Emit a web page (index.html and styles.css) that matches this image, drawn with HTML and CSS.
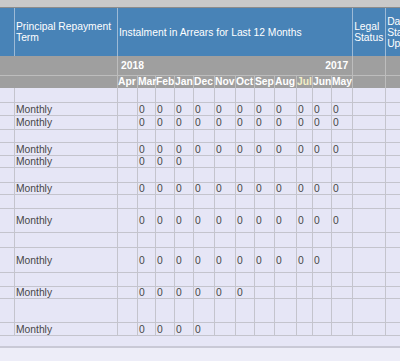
FILE: index.html
```html
<!DOCTYPE html>
<html lang="en">
  <head>
    <meta charset="UTF-8" />
    <title>Instalment Arrears</title>
    <link rel="stylesheet" href="styles.css">
  </head>
  <body>
    <div class="topbar"></div>
    <div class="grid-wrap">
      <table class="arrears">
        <colgroup>
          <col class="c-sel" />
          <col class="c-term" />
          <col class="c-apr" />
          <col class="c-mar" />
          <col class="c-feb" />
          <col class="c-jan" />
          <col class="c-dec" />
          <col class="c-nov" />
          <col class="c-oct" />
          <col class="c-sep" />
          <col class="c-aug" />
          <col class="c-jul" />
          <col class="c-jun" />
          <col class="c-may" />
          <col class="c-legal" />
          <col class="c-date" />
        </colgroup>
        <thead>
          <tr class="head">
            <th></th>
            <th>Principal Repayment Term</th>
            <th colspan="12">Instalment in Arrears for Last 12 Months</th>
            <th>Legal Status</th>
            <th>Date Status Updated</th>
          </tr>
          <tr class="years">
            <td colspan="2"></td>
            <td colspan="12">
              <div class="year-span"><span>2018</span><span>2017</span></div>
            </td>
            <td></td>
            <td></td>
          </tr>
          <tr class="months">
            <td colspan="2"></td>
            <td>Apr</td>
            <td>Mar</td>
            <td>Feb</td>
            <td>Jan</td>
            <td>Dec</td>
            <td>Nov</td>
            <td>Oct</td>
            <td>Sep</td>
            <td>Aug</td>
            <td class="cur">Jul</td>
            <td>Jun</td>
            <td>May</td>
            <td></td>
            <td></td>
          </tr>
        </thead>
        <tbody id="arrearsRows"></tbody>
      </table>
    </div>
    <div class="foot"></div>

    <script>
      // term, number of months in arrears (from Mar onwards), row height
      const rows = [
        ["", 0, "h15"],
        ["Monthly", 11, "h13"],
        ["Monthly", 11, "h14"],
        ["", 0, "h13"],
        ["Monthly", 11, "h13"],
        ["Monthly", 3, "h12"],
        ["", 0, "h15"],
        ["Monthly", 11, "h12"],
        ["", 0, "h14"],
        ["Monthly", 11, "h24"],
        ["", 0, "h15"],
        ["Monthly", 10, "h25"],
        ["", 0, "h14"],
        ["Monthly", 6, "h12"],
        ["", 0, "h24"],
        ["Monthly", 4, "h13"],
      ];

      const buildRows = () => {
        let body = document.getElementById("arrearsRows");
        for (let i = 0; i < rows.length; i++) {
          let tr = document.createElement("tr");
          tr.classList.add(rows[i][2]);
          let cells = ["", rows[i][0]];
          for (let m = 0; m < 12; m++) {
            cells.push(m >= 1 && m <= rows[i][1] ? "0" : "");
          }
          cells.push("", "");
          for (let c = 0; c < cells.length; c++) {
            let td = document.createElement("td");
            td.innerText = cells[c];
            tr.appendChild(td);
          }
          body.appendChild(tr);
        }
      };
      buildRows();
    </script>
  </body>
</html>
```

FILE: styles.css
```css
* {
  box-sizing: border-box;
}
body {
  margin: 0;
  background-color: #ededf8;
  font-family: "Liberation Sans", Arial, sans-serif;
  font-size: 10.3px;
  color: #454545;
}
.topbar {
  height: 8px;
  background-color: #c9c9c9;
  border-bottom: 1px solid #8c8c8c;
}
.grid-wrap {
  width: 400px;
  overflow: hidden;
}
.arrears {
  border-collapse: separate;
  border-spacing: 0;
  table-layout: fixed;
  width: 431px;
}
.c-sel { width: 15px; }
.c-term { width: 103px; }
.c-apr { width: 20px; }
.c-mar { width: 18px; }
.c-feb { width: 19px; }
.c-jan { width: 19px; }
.c-dec { width: 21px; }
.c-nov { width: 21px; }
.c-oct { width: 19px; }
.c-sep { width: 20px; }
.c-aug { width: 22px; }
.c-jul { width: 16px; }
.c-jun { width: 19px; }
.c-may { width: 21px; }
.c-legal { width: 33px; }
.c-date { width: 45px; }

.head th {
  height: 48px;
  background-color: #4883b7;
  color: #fff;
  font-weight: normal;
  text-align: left;
  vertical-align: middle;
  line-height: 11px;
  padding: 0 1px;
  border-right: 1px solid #9dbad6;
}

.years td {
  height: 20px;
  background-color: #9f9f9f;
  border-right: 1px solid #bdbdbd;
  border-bottom: 1px solid #bdbdbd;
  color: #fff;
  font-weight: bold;
  padding: 0;
}
.year-span {
  display: flex;
  justify-content: space-between;
  padding: 0 4px 0 3px;
}

.months td {
  height: 12px;
  line-height: 12px;
  background-color: #9f9f9f;
  border-right: 1px solid #bdbdbd;
  color: #fff;
  font-weight: bold;
  padding: 0;
  white-space: nowrap;
}
.months .cur {
  color: #f3efc6;
}

tbody td {
  background-color: #e6e6f6;
  border-right: 1px solid #c4c4cd;
  border-bottom: 1px solid #c4c4cd;
  padding: 0 1px;
  line-height: 11px;
  vertical-align: middle;
  white-space: nowrap;
  color: #474747;
}
.h12 td { height: 12px; }
.h13 td { height: 13px; }
.h14 td { height: 14px; }
.h15 td { height: 15px; }
.h24 td { height: 24px; }
.h25 td { height: 25px; }

.foot {
  height: 12px;
  background-color: #e6e6f6;
  border-bottom: 2px solid #c9c9d6;
}
```
